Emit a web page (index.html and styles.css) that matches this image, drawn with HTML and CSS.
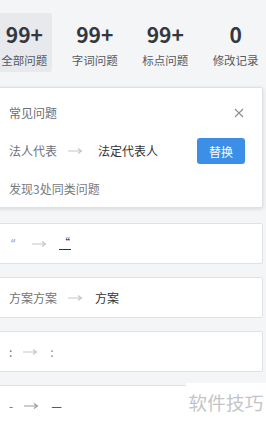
FILE: index.html
```html
<!DOCTYPE html>
<html lang="zh">
<head>
<meta charset="utf-8">
<link rel="stylesheet" href="styles.css">
</head>
<body>
<div class="page">
  <div class="tabs">
    <div class="tab active"><span class="num">99+</span><span class="label">全部问题</span></div>
    <div class="tab"><span class="num">99+</span><span class="label">字词问题</span></div>
    <div class="tab"><span class="num">99+</span><span class="label">标点问题</span></div>
    <div class="tab"><span class="num">0</span><span class="label">修改记录</span></div>
  </div>

  <div class="card main">
    <div class="head">
      <span class="title">常见问题</span>
      <svg class="close" width="10" height="10" viewBox="0 0 10 10"><path d="M1 1L9 9M9 1L1 9" stroke="#8a8d93" stroke-width="1.1" fill="none"/></svg>
    </div>
    <div class="row">
      <span class="from">法人代表</span>
      <svg class="arrow" width="15" height="8" viewBox="0 0 15 8"><path d="M0 4H13M10 1.5L13.5 4L10 6.5" stroke="#c4c6ca" stroke-width="1.1" fill="none"/></svg>
      <span class="to wide">法定代表人</span>
      <button class="btn">替换</button>
    </div>
    <div class="foot">发现3处同类问题</div>
  </div>

  <div class="card item">
    <span class="from quote">“</span>
    <svg class="arrow" width="15" height="8" viewBox="0 0 15 8"><path d="M0 4H13M10 1.5L13.5 4L10 6.5" stroke="#c4c6ca" stroke-width="1.1" fill="none"/></svg>
    <span class="to underq">“</span>
  </div>

  <div class="card item">
    <span class="from">方案方案</span>
    <svg class="arrow" width="15" height="8" viewBox="0 0 15 8"><path d="M0 4H13M10 1.5L13.5 4L10 6.5" stroke="#c4c6ca" stroke-width="1.1" fill="none"/></svg>
    <span class="to">方案</span>
  </div>

  <div class="card item">
    <span class="from">:</span>
    <svg class="arrow" width="15" height="8" viewBox="0 0 15 8"><path d="M0 4H13M10 1.5L13.5 4L10 6.5" stroke="#c4c6ca" stroke-width="1.1" fill="none"/></svg>
    <span class="to light">:</span>
  </div>

  <div class="card item">
    <span class="from">-</span>
    <svg class="arrow" width="15" height="8" viewBox="0 0 15 8"><path d="M0 4H13M10 1.5L13.5 4L10 6.5" stroke="#9a9ca0" stroke-width="1.1" fill="none"/></svg>
    <span class="to">—</span>
  </div>
</div>
<div class="watermark">软件技巧</div>
</body>
</html>
```

FILE: styles.css
```css
html, body {
  margin: 0;
  padding: 0;
}
body {
  width: 266px;
  height: 424px;
  overflow: hidden;
  background: #f4f5f7;
  font-family: "Noto Sans CJK SC", "Noto Sans", sans-serif;
  position: relative;
}
.page {
  margin-left: -12px;
  width: 275px;
}
.tabs {
  display: flex;
  gap: 15.7px;
  margin-top: 13px;
  padding-left: 9px;
}
.tab {
  width: 56px;
  height: 59px;
  box-sizing: border-box;
  padding-top: 10px;
  display: flex;
  flex-direction: column;
  align-items: center;
  border-radius: 3px;
}
.tab.active {
  background: #e8e9ec;
}
.num {
  font-size: 21px;
  font-weight: 700;
  line-height: 22px;
  color: #33373f;
}
.label {
  margin-top: 7px;
  font-size: 11.5px;
  line-height: 16px;
  color: #555961;
}
.card {
  background: #fff;
  border: 1px solid #dfe1e5;
  border-radius: 2px;
  box-sizing: border-box;
}
.card.main {
  margin-top: 15px;
  height: 121px;
  padding: 16px 17px 0 20px;
  box-shadow: 0 1px 4px rgba(0, 0, 0, 0.12);
}
.head {
  display: flex;
  justify-content: space-between;
  align-items: center;
  height: 18px;
}
.title {
  font-size: 12px;
  color: #6a6d73;
  line-height: 18px;
}
.close {
  margin-right: 1px;
}
.row {
  display: flex;
  align-items: center;
  margin-top: 16px;
  height: 26px;
}
.from {
  font-size: 12px;
  color: #6e7177;
  line-height: 18px;
}
.to {
  font-size: 12px;
  color: #303338;
  line-height: 18px;
}
.to.light {
  color: #8a8d93;
}
.arrow {
  margin: 0 12px 0 11px;
  flex: none;
}
.row .arrow {
  margin-right: 15px;
}
.btn {
  margin-left: auto;
  width: 48px;
  height: 26px;
  border: none;
  border-radius: 3px;
  background: #3c8fe7;
  color: #fff;
  font-family: inherit;
  font-size: 12px;
  padding: 0;
}
.foot {
  margin-top: 16px;
  font-size: 12px;
  line-height: 18px;
  color: #777a80;
}
.card.item {
  height: 41px;
  margin-top: 13px;
  padding-left: 20px;
  display: flex;
  align-items: center;
}
.card.main + .card.item {
  margin-top: 15px;
}
.quote {
  color: #a0a3a8;
  font-family: "Noto Sans", sans-serif;
  width: 12px;
  padding-left: 2px;
  box-sizing: border-box;
}
.underq {
  display: inline-block;
  width: 12px;
  height: 12px;
  line-height: 10px;
  font-size: 11px;
  border-bottom: 1px solid #303338;
}
.watermark {
  position: absolute;
  right: 0;
  bottom: 0;
  width: 80px;
  height: 41px;
  background: #fff;
  color: #c3c4c7;
  font-size: 18.5px;
  line-height: 38px;
  text-align: center;
  letter-spacing: 0.3px;
}
```
